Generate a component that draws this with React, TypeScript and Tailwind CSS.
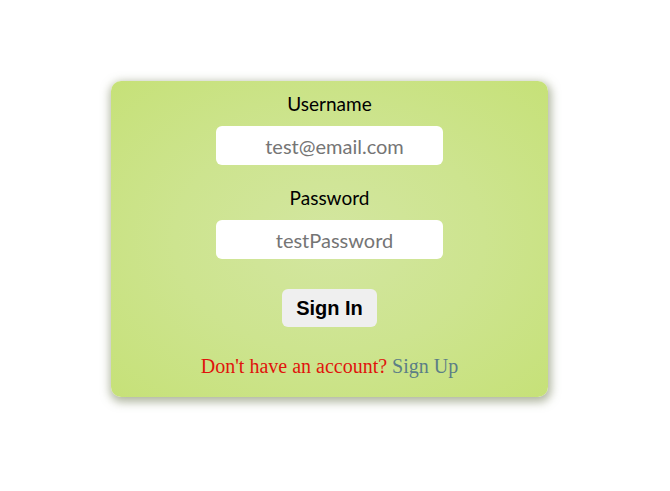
import React from "react";

export default function App() {
  return (
    <div className="w-[670px] h-[491px] bg-white">
      <div className="pt-[81px] pl-[111px]">
        <div
          className="w-[437px] h-[316px] rounded-[10px] flex flex-col items-center shadow-[1px_3px_10px_2px_rgba(110,120,80,0.55)]"
          style={{ background: "radial-gradient(ellipse at center, #d3e6a0 0%, #cde48f 50%, #c6e178 100%)" }}
        >
          <div className="mt-[10px] text-[19px] leading-[26px] text-black font-['Lato',sans-serif]">Username</div>
          <div className="mt-[9px] w-[227px] h-[39px] bg-white rounded-[6px] flex items-center justify-center pl-[10px] text-[20px] text-[#757575] font-['Lato',sans-serif]">
            test@email.com
          </div>
          <div className="mt-[20px] text-[19px] leading-[26px] text-black font-['Lato',sans-serif]">Password</div>
          <div className="mt-[9px] w-[227px] h-[39px] bg-white rounded-[6px] flex items-center justify-center pl-[10px] text-[20px] text-[#757575] font-['Lato',sans-serif]">
            testPassword
          </div>
          <div className="mt-[30px] w-[95px] h-[38px] bg-[#efefef] rounded-[6px] flex items-center justify-center text-[20px] font-bold text-black font-['Liberation_Sans',sans-serif]">
            Sign In
          </div>
          <div className="mt-[26px] text-[20px] leading-[26px] font-['Liberation_Serif',serif]">
            <span className="text-[#e0140c]">Don't have an account?</span>{" "}
            <span className="text-[#5b7e86]">Sign Up</span>
          </div>
        </div>
      </div>
    </div>
  );
}
